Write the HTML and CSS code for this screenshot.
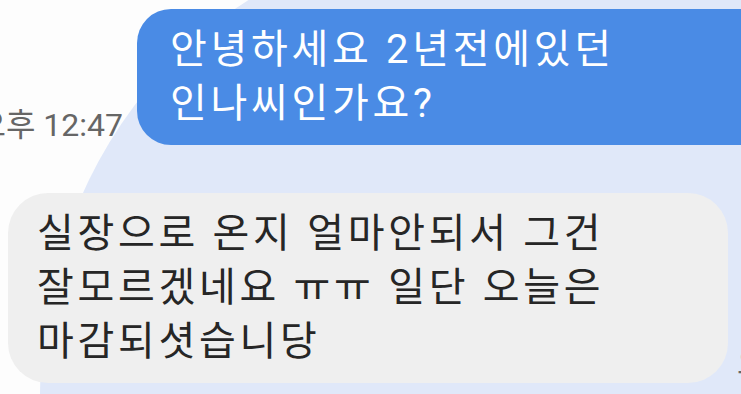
FILE: index.html
```html
<!DOCTYPE html>
<html lang="ko">
<head>
    <meta charset="UTF-8">
    <meta name="viewport" content="width=device-width, initial-scale=1.0">
    <title>Chat</title>
    <link rel="stylesheet" href="styles.css">
</head>
<body>
    <div class="screen">
        <div class="backdrop"></div>

        <div class="chat">
            <div class="row sent">
                <span class="time">오후 12:47</span>
                <div class="bubble out">안녕하세요 2년전에있던<br>인나씨인가요?</div>
            </div>

            <div class="row received">
                <div class="bubble in">실장으로 온지 얼마안되서 그건<br>잘모르겠네요 ㅠㅠ 일단 오늘은<br>마감되셧습니당</div>
                <span class="time">오후 12:48</span>
            </div>
        </div>
    </div>
</body>
</html>
```

FILE: styles.css
```css
/* General styles */
* {
    margin: 0;
    padding: 0;
    box-sizing: border-box;
}

body {
    font-family: Roboto, "Noto Sans CJK KR", sans-serif;
    background-color: #fdfdfd;
    overflow: hidden;
}

.screen {
    position: relative;
    width: 741px;
    height: 394px;
    overflow: hidden;
}

/* Light blue highlight */
.backdrop {
    position: absolute;
    top: -60px;
    left: 40px;
    right: 0;
    bottom: 0;
    background-color: #e0e8f9;
    border-top-left-radius: 420px 460px;
}

/* Messages */
.chat {
    position: relative;
    display: flex;
    flex-direction: column;
    gap: 48px;
    padding-top: 9px;
}

.row {
    display: flex;
    align-items: flex-end;
    white-space: nowrap;
}

.sent {
    gap: 14px;
}

.received {
    gap: 9px;
    padding-left: 8px;
}

.time {
    flex: none;
    font-size: 32px;
    line-height: 36px;
    color: #666;
    margin-bottom: 2px;
}

.sent .time {
    width: 160px;
    margin-left: -37px;
    text-align: right;
}

.bubble {
    flex: none;
    font-size: 40px;
    line-height: 54px;
    letter-spacing: 3.7px;
    padding: 14px 30px;
}

.out {
    background-color: #4a8be5;
    color: #fff;
    padding-left: 33px;
    padding-right: 260px;
    border-radius: 34px;
}

.in {
    width: 720px;
    background-color: #efefef;
    color: #262626;
    padding-left: 29px;
    border-radius: 40px;
}
```
